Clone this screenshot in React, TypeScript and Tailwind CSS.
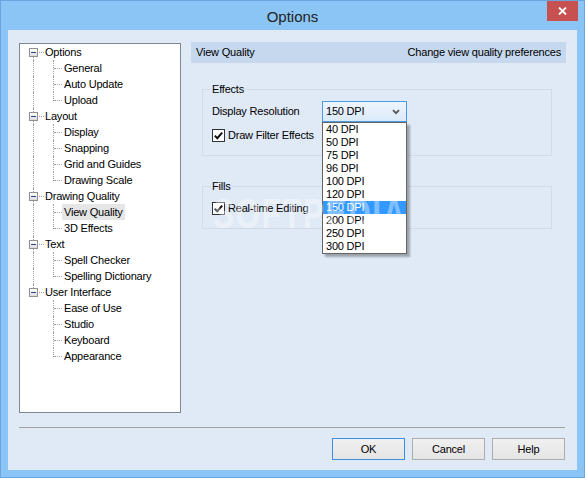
import { Fragment } from "react";

const tree = [
  { label: "Options", children: ["General", "Auto Update", "Upload"] },
  { label: "Layout", children: ["Display", "Snapping", "Grid and Guides", "Drawing Scale"] },
  { label: "Drawing Quality", children: ["View Quality", "3D Effects"] },
  { label: "Text", children: ["Spell Checker", "Spelling Dictionary"] },
  { label: "User Interface", children: ["Ease of Use", "Studio", "Keyboard", "Appearance"] },
];

const dpis = ["40 DPI", "50 DPI", "75 DPI", "96 DPI", "100 DPI", "120 DPI", "150 DPI", "200 DPI", "250 DPI", "300 DPI"];

const font = { fontFamily: '"Liberation Sans", Arial, sans-serif' };

function Check() {
  return (
    <span className="flex h-[13px] w-[13px] items-center justify-center border border-[#333] bg-white">
      <svg width="11" height="11" viewBox="0 0 11 11">
        <path d="M1.8 5.6 L4.3 8.2 L9.2 2.6" fill="none" stroke="#111" strokeWidth="2" />
      </svg>
    </span>
  );
}

function Btn({ label, primary }: { label: string; primary?: boolean }) {
  return (
    <button
      className={
        "flex h-[22px] w-[73px] items-center justify-center border bg-gradient-to-b from-[#f0f0f0] to-[#e5e5e5] text-[11px] " +
        (primary ? "border-[#3c8fe0]" : "border-[#adadad]")
      }
    >
      {label}
    </button>
  );
}

function TreePanel() {
  return (
    <div className="mt-px h-[370px] w-[162px] shrink-0 border border-[#828790] bg-white">
      {tree.map((node, ri) => {
        const lastRoot = ri === tree.length - 1;
        return (
          <Fragment key={node.label}>
            <div className="relative h-4 leading-4">
              {ri > 0 && <span className="absolute left-[13px] top-0 h-[4px] border-l border-dotted border-[#a0a0a0]" />}
              {!lastRoot && <span className="absolute left-[13px] top-[13px] h-[3px] border-l border-dotted border-[#a0a0a0]" />}
              <span className="absolute left-[9px] top-[4px] flex h-[9px] w-[9px] items-center justify-center border border-[#919191] bg-gradient-to-b from-white to-[#dcdcdc]">
                <span className="h-px w-[5px] bg-[#2b4a86]" />
              </span>
              <span className="absolute left-[19px] top-[8px] w-[5px] border-t border-dotted border-[#a0a0a0]" />
              <span className="pl-[25px]">{node.label}</span>
            </div>
            {node.children.map((c, ci) => {
              const lastChild = ci === node.children.length - 1;
              const selected = c === "View Quality";
              return (
                <div key={c} className="relative h-4 leading-4">
                  {!lastRoot && <span className="absolute left-[13px] top-0 h-4 border-l border-dotted border-[#a0a0a0]" />}
                  <span
                    className={
                      "absolute left-[33px] top-0 border-l border-dotted border-[#a0a0a0] " + (lastChild ? "h-[9px]" : "h-4")
                    }
                  />
                  <span className="absolute left-[34px] top-[8px] w-[8px] border-t border-dotted border-[#a0a0a0]" />
                  <span className={"ml-[42px] inline-block h-4 px-[2px] " + (selected ? "bg-[#e6e6e6]" : "")}>{c}</span>
                </div>
              );
            })}
          </Fragment>
        );
      })}
    </div>
  );
}

function Settings() {
  return (
    <div className="relative flex-1">
      <div className="flex h-[21px] items-center justify-between bg-[#c5d8ee] px-[5px]">
        <span>View Quality</span>
        <span>Change view quality preferences</span>
      </div>

      <fieldset className="ml-[11px] mr-[14px] mt-[20px] border border-[#d3dbe4] px-[9px] pb-[12px] pt-[5px]">
        <legend className="ml-[-1px] px-[1px] leading-[13px]">Effects</legend>
        <div className="flex items-center">
          <span className="w-[110px]">Display Resolution</span>
          <div className="relative">
            <div className="flex h-[21px] w-[85px] items-center justify-between border border-[#4a9be8] bg-gradient-to-b from-[#edf5fc] to-[#dbeafa] pl-[3px] pr-[6px]">
              <span>150 DPI</span>
              <svg width="8" height="6" viewBox="0 0 8 6">
                <path d="M1 1.2 L4 4.2 L7 1.2" fill="none" stroke="#555" strokeWidth="1.8" />
              </svg>
            </div>
            <div className="absolute left-0 top-full z-10 w-[85px] border border-[#646464] bg-white shadow-[3px_3px_2px_rgba(0,0,0,0.3)]">
              {dpis.map((d) => (
                <div
                  key={d}
                  className={"h-[13px] pl-[3px] leading-[13px] " + (d === "150 DPI" ? "bg-[#3399ff] text-white" : "")}
                >
                  {d}
                </div>
              ))}
            </div>
          </div>
        </div>
        <div className="mt-[5px] flex h-4 items-center gap-[3px]">
          <Check />
          <span>Draw Filter Effects</span>
        </div>
      </fieldset>

      <fieldset className="ml-[11px] mr-[14px] mt-[24px] border border-[#d3dbe4] px-[9px] pb-[12px] pt-[7px]">
        <legend className="ml-[-1px] px-[1px] leading-[13px]">Fills</legend>
        <div className="flex h-4 items-center gap-[3px]">
          <Check />
          <span>Real-time Editing</span>
        </div>
      </fieldset>

      <div className="pointer-events-none absolute left-[22px] top-[140px] z-20 origin-left scale-x-75 text-[42px] font-bold tracking-[2px] text-white/40">
        SOFTPEDIA
      </div>
    </div>
  );
}

export default function App() {
  return (
    <div
      className="flex h-[478px] w-[585px] flex-col border border-[#6aa6de] bg-[#8bc5f6] text-[11px] tracking-[-0.2px] text-black"
      style={font}
    >
      <div className="grid h-[29px] shrink-0 grid-cols-[1fr_auto_1fr]">
        <div />
        <div className="pt-[5px] text-[15px] tracking-normal text-[#222]">Options</div>
        <div className="flex justify-end pr-[6px]">
          <div className="flex h-[20px] w-[31px] items-center justify-center bg-[#c75050]">
            <svg width="9" height="8" viewBox="0 0 9 8">
              <path d="M1 0.5 L8 7.5 M8 0.5 L1 7.5" stroke="white" strokeWidth="1.8" />
            </svg>
          </div>
        </div>
      </div>

      <div className="mx-[7px] flex h-[440px] flex-col bg-[#e0eaf6] px-[11px] pt-[12px]">
        <div className="flex gap-[10px]">
          <TreePanel />
          <Settings />
        </div>
        <div className="mr-px mt-[14px] border-t border-[#a0a0a0]" />
        <div className="mt-[10px] flex justify-end gap-[7px] pr-px">
          <Btn label="OK" primary />
          <Btn label="Cancel" />
          <Btn label="Help" />
        </div>
      </div>
    </div>
  );
}
